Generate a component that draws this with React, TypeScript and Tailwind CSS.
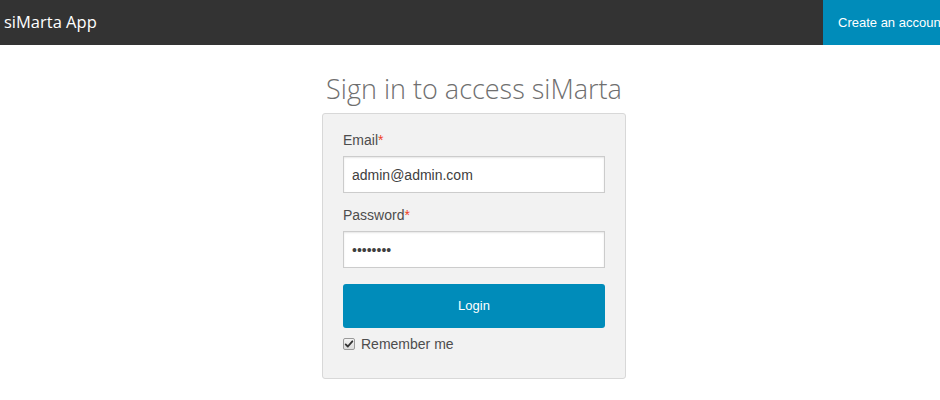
import { useState } from 'react';

export default function App() {
  const [email, setEmail] = useState('admin@admin.com');
  const [password, setPassword] = useState('password');
  const [remember, setRemember] = useState(true);

  return (
    <div className="min-h-[400px] bg-white font-['Liberation_Sans',Arial,sans-serif]">
      {/* top bar */}
      <nav className="flex h-[45px] items-stretch justify-between bg-[#333333]">
        <a className="flex items-center pl-1 font-['Open_Sans',sans-serif] text-[16.5px] text-white">siMarta App</a>
        <div className="flex w-[117px] items-center overflow-hidden whitespace-nowrap bg-[#008cba] pl-[15px] text-[13px] text-white">
          Create an account
        </div>
      </nav>

      <main className="flex flex-col items-center pl-2">
        <h1 className="mt-[27px] font-['Open_Sans',sans-serif] text-[27px] font-light leading-[34px] text-[#6f6f6f]">
          Sign in to access siMarta
        </h1>

        <form
          className="mt-[7px] w-[304px] rounded-[3px] border border-[#d8d8d8] bg-[#f2f2f2] px-5 pt-[15px] pb-5"
          onSubmit={(e) => e.preventDefault()}
        >
          <label className="mb-[5px] block text-[14px] leading-[22px] text-[#4d4d4d]">
            Email<span className="text-[#f04124]">*</span>
          </label>
          <input
            type="text"
            value={email}
            onChange={(e) => setEmail(e.target.value)}
            className="mb-[11px] block h-[37px] w-full border border-[#cccccc] bg-white px-2 text-[14px] text-[#404040] shadow-[inset_0_1px_2px_rgba(0,0,0,0.1)] outline-none"
          />

          <label className="mb-[5px] block text-[14px] leading-[22px] text-[#4d4d4d]">
            Password<span className="text-[#f04124]">*</span>
          </label>
          <input
            type="password"
            value={password}
            onChange={(e) => setPassword(e.target.value)}
            className="mb-4 block h-[37px] w-full border border-[#cccccc] bg-white px-2 text-[14px] text-[#404040] shadow-[inset_0_1px_2px_rgba(0,0,0,0.1)] outline-none"
          />

          <button
            type="submit"
            className="block h-[44px] w-full rounded-[3px] bg-[#008cba] text-[13px] text-white"
          >
            Login
          </button>

          <label
            className="mt-[8px] flex h-[16px] cursor-pointer items-center text-[14px] text-[#4d4d4d]"
            onClick={() => setRemember(!remember)}
          >
            <span className="mr-[6px] flex h-[12px] w-[12px] items-center justify-center rounded-[2px] border border-[#9a9a9a] bg-gradient-to-b from-[#f4f4f4] to-[#dcdcdc]">
              {remember && (
                <svg viewBox="0 0 12 12" className="h-[10px] w-[10px]">
                  <path d="M2 6.5 L4.6 9 L10 2.8" fill="none" stroke="#333" strokeWidth="2.2" strokeLinecap="round" strokeLinejoin="round" />
                </svg>
              )}
            </span>
            Remember me
          </label>
          <div className="h-[6px]" />
        </form>
      </main>
    </div>
  );
}
